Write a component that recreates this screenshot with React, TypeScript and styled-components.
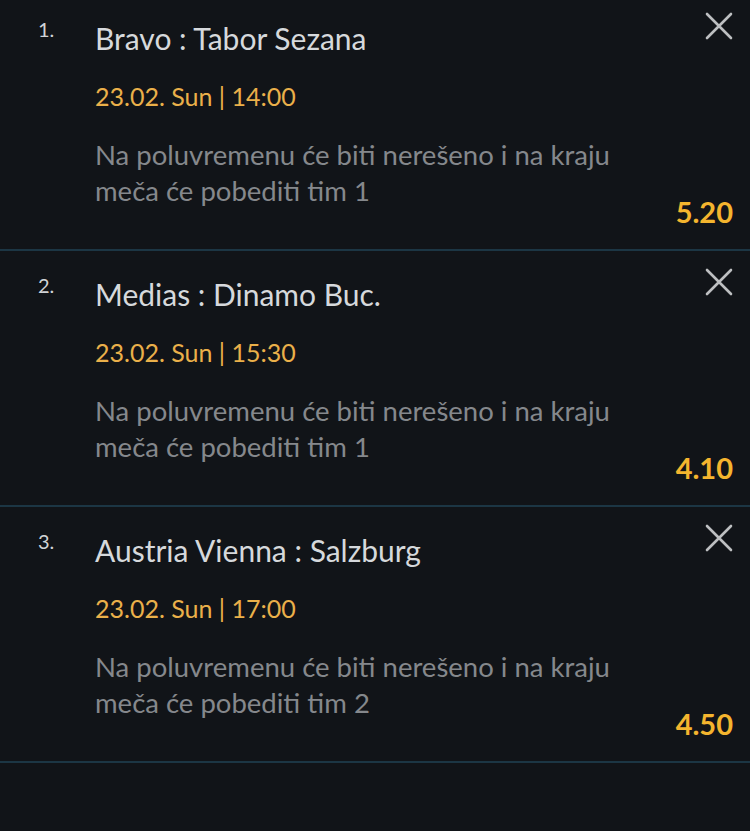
import React, { ReactElement } from 'react';
import styled, { createGlobalStyle } from 'styled-components';

const GlobalStyle = createGlobalStyle`
  html, body {
    margin: 0;
    padding: 0;
    background: #111418;
  }
  body {
    font-family: Lato, 'Liberation Sans', sans-serif;
    -webkit-font-smoothing: antialiased;
  }
`;

const Page = styled.div`
  width: 750px;
  min-height: 831px;
  background: #111418;
  overflow: hidden;
`;

const List = styled.div`
  display: flex;
  flex-direction: column;
  margin-top: -5px;
`;

const Row = styled.div`
  display: grid;
  grid-template-columns: 57px 1fr auto;
  padding: 0 17px 0 38px;
  height: 254px;
  border-bottom: 2px solid #1c3644;
`;

const Index = styled.div`
  padding-top: 24px;
  font-size: 20px;
  line-height: 20px;
  color: #d0d3d6;
`;

const Body = styled.div`
  display: flex;
  flex-direction: column;
  padding-top: 25px;
`;

const Title = styled.div`
  font-size: 30px;
  line-height: 36px;
  color: #d6d9dc;
`;

const When = styled.div`
  margin-top: 22px;
  font-size: 25px;
  line-height: 36px;
  color: #eab04a;
`;

const Pick = styled.div`
  margin-top: 23px;
  font-size: 27.5px;
  line-height: 36px;
  color: #85888c;
`;

const Side = styled.div`
  display: flex;
  flex-direction: column;
  align-items: flex-end;
  justify-content: space-between;
  padding: 17px 0 22px;
`;

const Close = styled.button`
  display: flex;
  padding: 0;
  margin-right: -1px;
  border: 0;
  background: none;
  cursor: pointer;
`;

const Odds = styled.div`
  font-size: 29px;
  line-height: 30px;
  font-weight: 700;
  color: #f4b52e;
`;

interface Bet {
  match: string;
  date: string;
  pick: string[];
  odds: string;
}

const bets: Bet[] = [
  {
    match: 'Bravo : Tabor Sezana',
    date: '23.02. Sun | 14:00',
    pick: ['Na poluvremenu će biti nerešeno i na kraju', 'meča će pobediti tim 1'],
    odds: '5.20',
  },
  {
    match: 'Medias : Dinamo Buc.',
    date: '23.02. Sun | 15:30',
    pick: ['Na poluvremenu će biti nerešeno i na kraju', 'meča će pobediti tim 1'],
    odds: '4.10',
  },
  {
    match: 'Austria Vienna : Salzburg',
    date: '23.02. Sun | 17:00',
    pick: ['Na poluvremenu će biti nerešeno i na kraju', 'meča će pobediti tim 2'],
    odds: '4.50',
  },
];

function CloseIcon(): ReactElement {
  return (
    <svg width="30" height="28" viewBox="0 0 30 28">
      <path d="M3 2 L27 26 M27 2 L3 26" stroke="#bdbfc1" strokeWidth="2.6" strokeLinecap="round" />
    </svg>
  );
}

function BetRow({ bet, index }: { bet: Bet; index: number }): ReactElement {
  return (
    <Row>
      <Index>{index}.</Index>
      <Body>
        <Title>{bet.match}</Title>
        <When>{bet.date}</When>
        <Pick>
          {bet.pick.map((line) => (
            <div key={line}>{line}</div>
          ))}
        </Pick>
      </Body>
      <Side>
        <Close aria-label="remove">
          <CloseIcon />
        </Close>
        <Odds>{bet.odds}</Odds>
      </Side>
    </Row>
  );
}

export default function App(): ReactElement {
  return (
    <Page>
      <GlobalStyle />
      <List>
        {bets.map((bet, i) => (
          <BetRow key={bet.match} bet={bet} index={i + 1} />
        ))}
      </List>
    </Page>
  );
}
